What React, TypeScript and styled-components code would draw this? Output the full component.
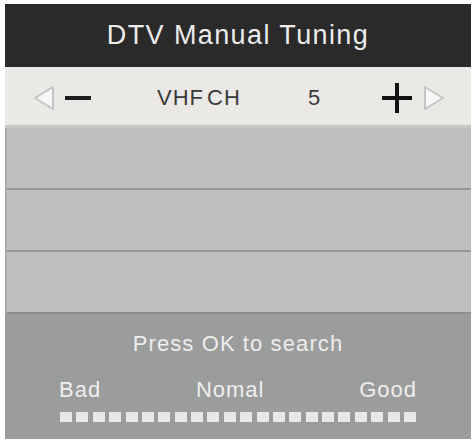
import React from 'react';
import styled, { createGlobalStyle } from 'styled-components';

const GlobalStyle = createGlobalStyle`
  html, body {
    margin: 0;
    padding: 0;
    background: #ffffff;
  }
  body {
    font-family: "Liberation Sans", Arial, sans-serif;
  }
`;

const Screen = styled.div`
  width: 466px;
  margin: 4px 0 0 5px;
  display: flex;
  flex-direction: column;
  background: #9b9c9c;
`;

const TitleBar = styled.div`
  height: 63px;
  background: #2a2a2a;
  color: #ececec;
  display: flex;
  align-items: center;
  justify-content: center;
  font-size: 27px;
  letter-spacing: 1.4px;
`;

const ChannelRow = styled.div`
  height: 61px;
  background: #ebe9e6;
  border-bottom: 3px solid #c9c7c4;
  box-sizing: border-box;
  padding: 3px 0 0 28px;
  display: flex;
  align-items: center;
  color: #3a3a3a;
  font-size: 22px;
`;

const Item = styled.div<{ $gap?: number; $w?: number }>`
  display: flex;
  align-items: center;
  flex: none;
  margin-left: ${p => p.$gap ?? 0}px;
  width: ${p => (p.$w ? `${p.$w}px` : 'auto')};
`;

const Label = styled(Item)`
  letter-spacing: 1px;
  word-spacing: -4px;
`;

const Lines = styled.div`
  display: flex;
  flex-direction: column;
  border-left: 2px solid #a9a9a9;
`;

const Slot = styled.div<{ $last?: boolean }>`
  height: 60px;
  background: #bfbfbf;
  border-bottom: 2px solid ${p => (p.$last ? '#8d8d8d' : '#959595')};
`;

const Footer = styled.div`
  height: 125px;
  background: #9b9c9c;
  color: #eeeeee;
  display: flex;
  flex-direction: column;
  align-items: center;
  padding-top: 17px;
  box-sizing: border-box;
`;

const Hint = styled.div`
  font-size: 22px;
  letter-spacing: 1.1px;
`;

const Scale = styled.div`
  width: 358px;
  margin-top: 20px;
  display: flex;
  justify-content: space-between;
  font-size: 22px;
  letter-spacing: 1px;
`;

const Meter = styled.div`
  width: 356px;
  margin-top: 9px;
  display: flex;
  justify-content: space-between;
`;

const Block = styled.div`
  width: 12px;
  height: 10px;
  background: #e8e8e8;
`;

const Arrow: React.FC<{ dir: 'left' | 'right' }> = ({ dir }) => (
  <svg width="22" height="26" viewBox="0 0 22 26">
    <polygon
      points={dir === 'left' ? '20,2 2,13 20,24' : '2,2 20,13 2,24'}
      fill="#f7f7f5"
      stroke="#c4c4c4"
      strokeWidth="2"
      strokeLinejoin="round"
    />
  </svg>
);

const Minus = () => (
  <svg width="26" height="6" viewBox="0 0 26 6">
    <rect x="0" y="1" width="26" height="4" fill="#1e1e1e" />
  </svg>
);

const Plus = () => (
  <svg width="30" height="30" viewBox="0 0 30 30">
    <rect x="0" y="13" width="30" height="4" fill="#111111" />
    <rect x="13" y="0" width="4" height="30" fill="#111111" />
  </svg>
);

export default function App() {
  return (
    <>
      <GlobalStyle />
      <Screen>
        <TitleBar>DTV Manual Tuning</TitleBar>
        <ChannelRow>
          <Item><Arrow dir="left" /></Item>
          <Item $gap={10}><Minus /></Item>
          <Label $gap={66} $w={88}>VHF CH</Label>
          <Item $gap={63} $w={12}>5</Item>
          <Item $gap={62}><Plus /></Item>
          <Item $gap={11}><Arrow dir="right" /></Item>
        </ChannelRow>
        <Lines>
          <Slot />
          <Slot />
          <Slot $last />
        </Lines>
        <Footer>
          <Hint>Press OK to search</Hint>
          <Scale>
            <span>Bad</span>
            <span>Nomal</span>
            <span>Good</span>
          </Scale>
          <Meter>
            {Array.from({ length: 22 }).map((_, i) => (
              <Block key={i} />
            ))}
          </Meter>
        </Footer>
      </Screen>
    </>
  );
}
